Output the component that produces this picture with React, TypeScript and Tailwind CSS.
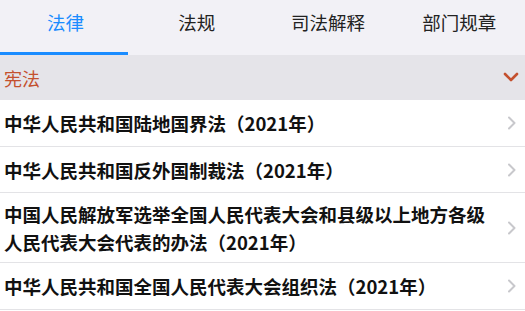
import React from "react";

const font = { fontFamily: '"Noto Sans CJK SC", "Noto Sans", sans-serif' };

const tabs = ["法律", "法规", "司法解释", "部门规章"];

const rows = [
  ["中华人民共和国陆地国界法（2021年）"],
  ["中华人民共和国反外国制裁法（2021年）"],
  ["中国人民解放军选举全国人民代表大会和县级以上地方各级", "人民代表大会代表的办法（2021年）"],
  ["中华人民共和国全国人民代表大会组织法（2021年）"],
];

function ChevronRight() {
  return (
    <svg width="10" height="14" viewBox="0 0 10 14" fill="none">
      <path d="M2 1.5 L7.5 7 L2 12.5" stroke="#c8c8cc" strokeWidth="2" strokeLinecap="round" strokeLinejoin="round" />
    </svg>
  );
}

export default function App() {
  return (
    <div className="w-[525px] h-[311px] overflow-hidden bg-white" style={font}>
      <div className="flex h-[55px] bg-[#f2f1f6]">
        {tabs.map((t, i) => (
          <div key={t} className="relative flex-1 flex justify-center pt-[8px]">
            <span className={`text-[18.5px] leading-[28px] ${i === 0 ? "text-[#1a8cff]" : "text-[#222]"}`}>{t}</span>
            {i === 0 && <div className="absolute left-0 bottom-0 h-[3px] w-[128px] bg-[#1a8cff]" />}
          </div>
        ))}
      </div>
      <div className="flex items-center justify-between h-[45px] bg-[#e5e4e9] pl-[4px] pr-[4px]">
        <span className="text-[18px] text-[#c4502e] leading-[28px]">宪法</span>
        <svg width="16" height="12" viewBox="0 0 16 12" fill="none" className="mr-[2px] mt-[-2px]">
          <path d="M2 3 L8 9 L14 3" stroke="#c4502e" strokeWidth="2.6" strokeLinecap="round" strokeLinejoin="round" />
        </svg>
      </div>
      <div className="flex flex-col">
        {rows.map((r, i) => (
          <div
            key={i}
            className={`flex items-center justify-between pl-[4px] pr-[8px] border-b border-[#e3e3e6] ${r.length > 1 ? "h-[70px]" : i === 1 ? "h-[46px]" : "h-[47px]"}`}
          >
            <div className="flex flex-col text-[18.5px] font-bold text-[#111] leading-[28px]">
              {r.map((l) => (
                <span key={l}>{l}</span>
              ))}
            </div>
            <ChevronRight />
          </div>
        ))}
      </div>
    </div>
  );
}
